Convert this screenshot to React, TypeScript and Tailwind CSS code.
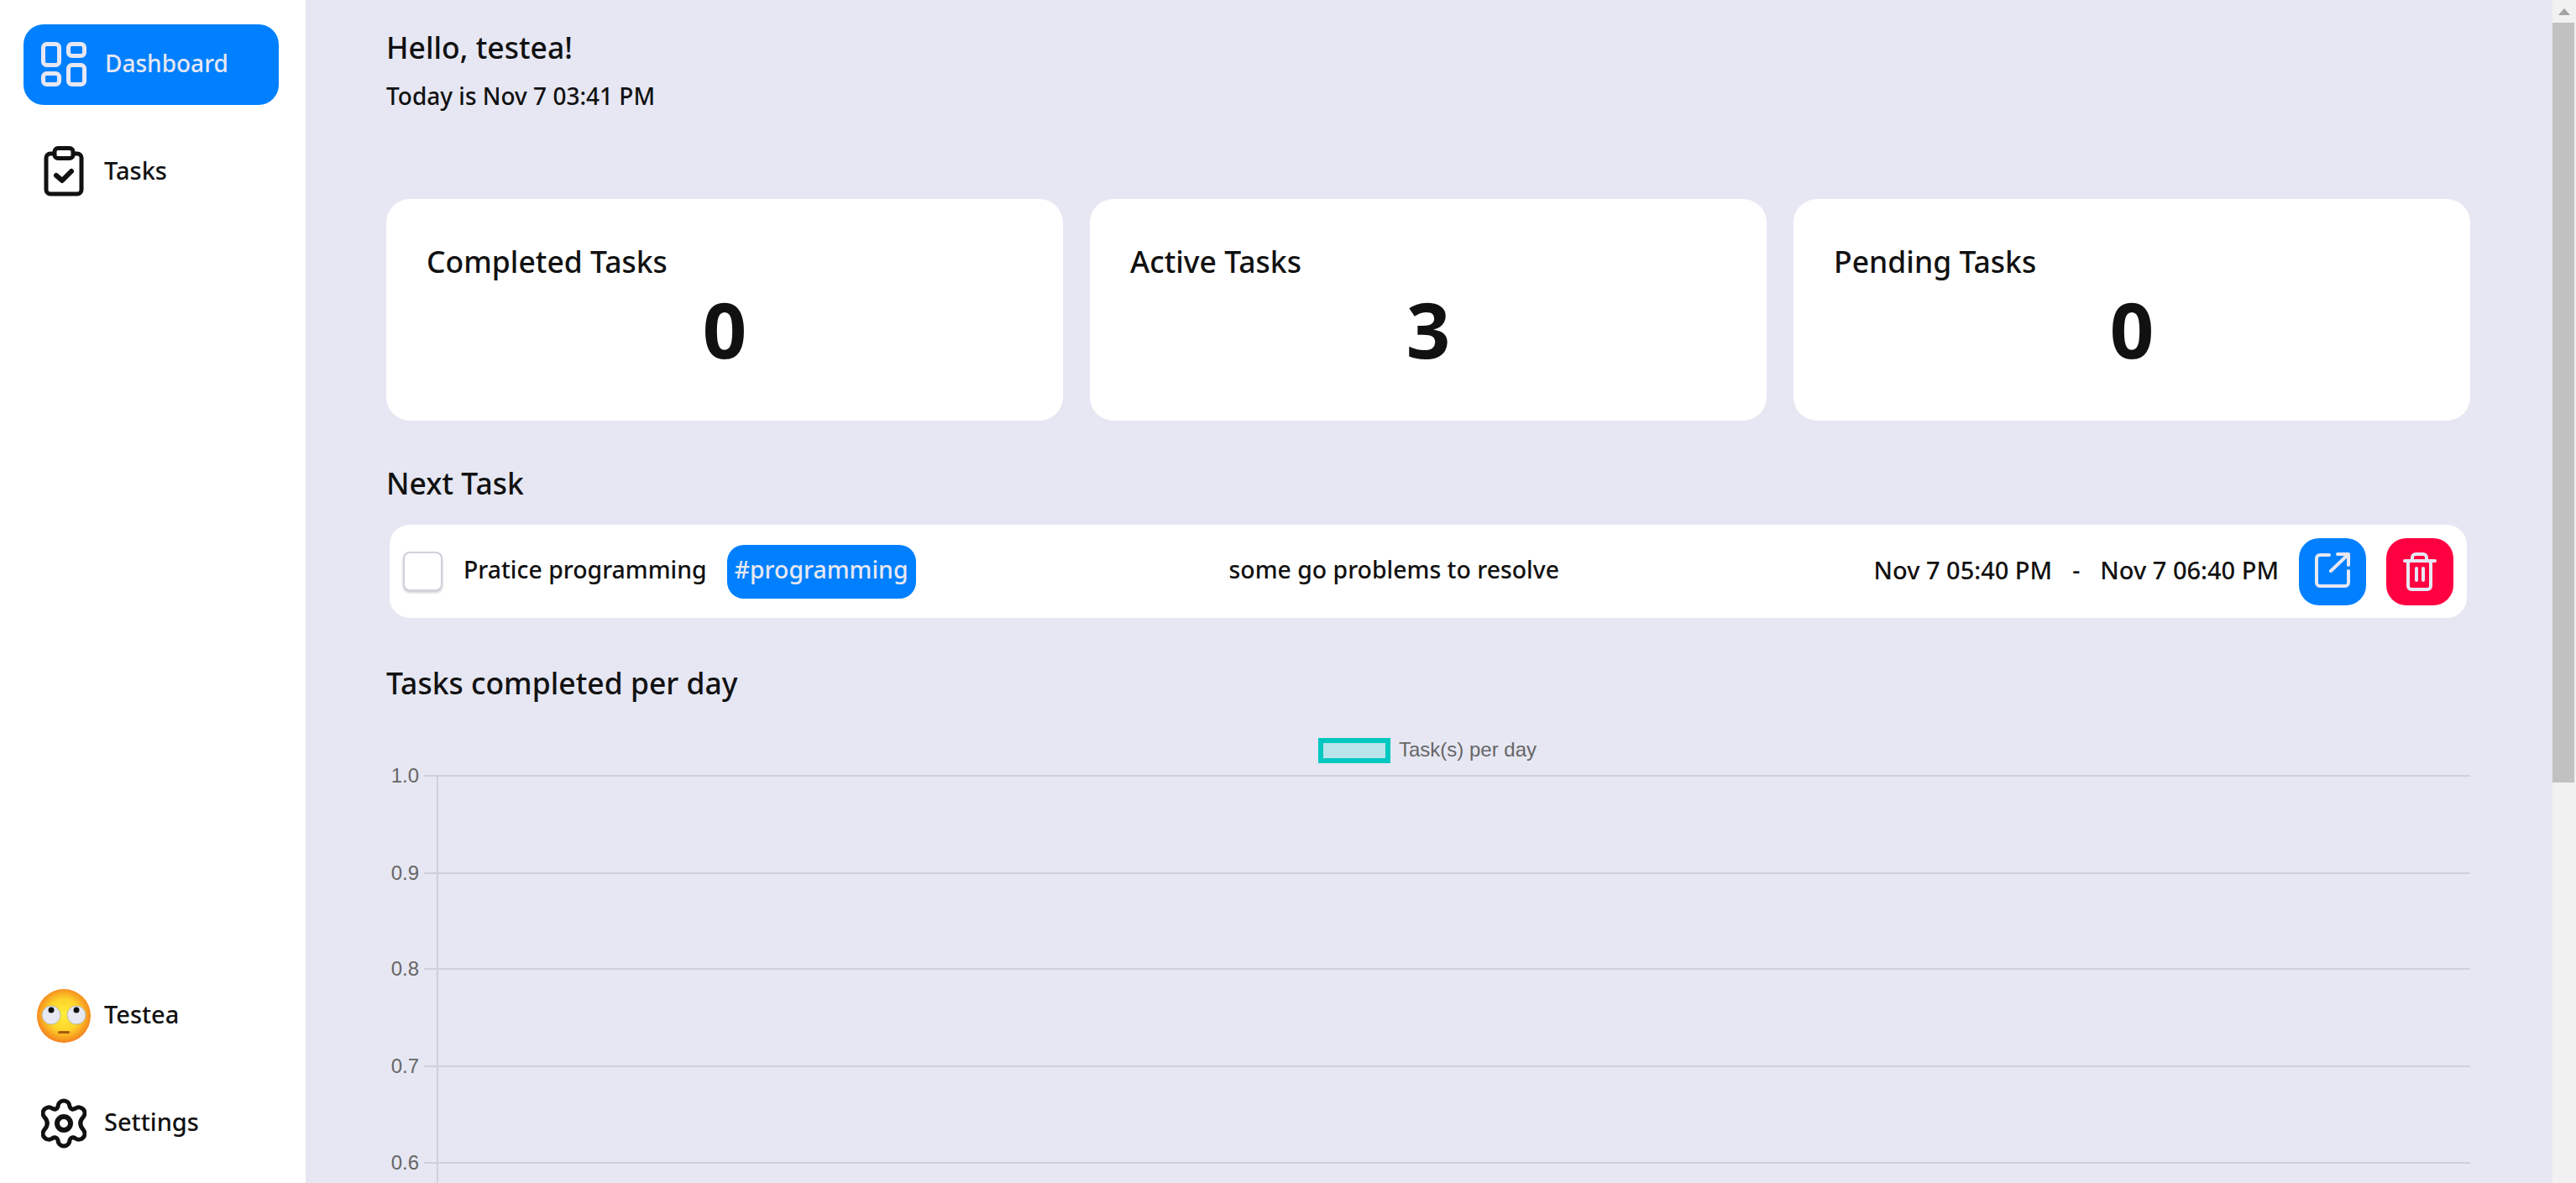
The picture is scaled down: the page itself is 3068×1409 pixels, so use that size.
import React from 'react';

const tasksCards = [
    { title: "Completed Tasks", value: 0 },
    { title: "Active Tasks", value: 3 },
    { title: "Pending Tasks", value: 0 },
];

const ticks = [
    { label: "1.0", y: 15 },
    { label: "0.9", y: 131 },
    { label: "0.8", y: 245 },
    { label: "0.7", y: 361 },
    { label: "0.6", y: 476 },
];

const DashboardIcon = () => (
    <svg width="54" height="54" viewBox="0 0 54 54" fill="none" stroke="#e6e7f3" strokeWidth="5">
        <rect x="2.5" y="2.5" width="19" height="25" rx="4" />
        <rect x="32.5" y="2.5" width="19" height="14" rx="4" />
        <rect x="2.5" y="37.5" width="19" height="13" rx="4" />
        <rect x="32.5" y="27.5" width="19" height="23" rx="4" />
    </svg>
);

const TasksIcon = () => (
    <svg width="48" height="60" viewBox="0 0 48 60" fill="none" stroke="#111" strokeWidth="5" strokeLinecap="round" strokeLinejoin="round">
        <path d="M12 9H8a5 5 0 0 0-5 5v38a5 5 0 0 0 5 5h32a5 5 0 0 0 5-5V14a5 5 0 0 0-5-5h-4" />
        <rect x="13" y="2.5" width="22" height="12" rx="4" />
        <path d="M15 35l7 6 11-11" strokeWidth="6" />
    </svg>
);

const SettingsIcon = () => (
    <svg width="54" height="60" viewBox="0 0 54 60" fill="none" stroke="#111" strokeWidth="5" strokeLinejoin="round">
        <path d="M20 10A7 7 0 0 1 34 10Q36 15 41 12A7 7 0 0 1 50.5 22Q43 30 50.5 38A7 7 0 0 1 41 48Q36 45 34 50A7 7 0 0 1 20 50Q18 45 13 48A7 7 0 0 1 3.5 38Q11 30 3.5 22A7 7 0 0 1 13 12Q18 15 20 10Z" />
        <circle cx="27" cy="30" r="8" strokeWidth="6" />
    </svg>
);

const EmojiIcon = () => (
    <svg width="64" height="64" viewBox="0 0 64 64">
        <defs>
            <radialGradient id="face" cx="50%" cy="48%" r="54%">
                <stop offset="0%" stopColor="#ffee3a" />
                <stop offset="55%" stopColor="#fdd32a" />
                <stop offset="100%" stopColor="#f47a1c" />
            </radialGradient>
        </defs>
        <circle cx="32" cy="32" r="32" fill="url(#face)" />
        <circle cx="17" cy="31" r="11" fill="#e6e9f4" stroke="#b9b9a8" />
        <circle cx="47" cy="31" r="11" fill="#e6e9f4" stroke="#b9b9a8" />
        <circle cx="17" cy="25" r="3.5" fill="#111" />
        <circle cx="47" cy="25" r="3.5" fill="#111" />
        <rect x="25" y="50" width="14" height="3" rx="1.5" fill="#a85a10" />
    </svg>
);

const App: React.FC = () => {
    return (
        <div className="flex h-[1409px] overflow-hidden bg-[#e6e7f3] font-['Noto_Sans',sans-serif] font-medium text-[#111]">
            <aside className="flex w-[364px] shrink-0 flex-col justify-between bg-white pt-[29px] pb-[41px] pl-[28px] pr-[32px]">
                <nav className="flex flex-col gap-[48px]">
                    <div className="flex h-[96px] items-center gap-[22px] rounded-[24px] bg-[#0080ff] pl-[21px] text-[28px] text-[#e6e7f3]">
                        <DashboardIcon />
                        <span className="pb-[4px]">Dashboard</span>
                    </div>
                    <div className="flex h-[62px] items-center gap-[24px] pl-[24px] text-[29px]">
                        <TasksIcon />
                        <span className="pb-[2px]">Tasks</span>
                    </div>
                </nav>
                <div className="flex flex-col gap-[66px]">
                    <div className="flex h-[64px] items-center gap-[16px] pl-[16px] text-[29px]">
                        <EmojiIcon />
                        <span className="pb-[4px]">Testea</span>
                    </div>
                    <div className="flex h-[60px] items-center gap-[21px] pl-[21px] text-[29px]">
                        <SettingsIcon />
                        <span className="pb-[4px]">Settings</span>
                    </div>
                </div>
            </aside>

            <main className="flex min-w-0 flex-1 flex-col pl-[96px] pr-[98px]">
                <h1 className="mt-[32px] text-[35.5px] leading-[48px]">Hello, testea!</h1>
                <p className="mt-[14px] text-[28px] leading-[40px]">Today is Nov 7 03:41 PM</p>

                <section className="mt-[103px] grid grid-cols-3 gap-[32px]">
                    {tasksCards.map(card => (
                        <div key={card.title} className="h-[264px] rounded-[28px] bg-white px-[48px] pt-[50px]">
                            <h2 className="text-[35.5px] leading-[48px]">{card.title}</h2>
                            <div className="mt-[7px] text-center text-[92px] font-bold leading-[100px]">{card.value}</div>
                        </div>
                    ))}
                </section>

                <h2 className="mt-[50px] text-[35.5px] leading-[48px]">Next Task</h2>

                <section className="mx-[4px] mt-[26px] flex h-[112px] items-center rounded-[24px] bg-white pl-[16px] pr-[16px] text-[28.4px]">
                    <div className="h-[47px] w-[47px] shrink-0 rounded-[8px] border-2 border-[#d0d1dc] bg-white shadow-[0_2px_3px_rgba(0,0,0,0.2)]" />
                    <span className="ml-[25px] pb-[4px]">Pratice programming</span>
                    <span className="ml-[24px] flex h-[64px] items-center rounded-[20px] bg-[#0080ff] px-[9px] pb-[4px] text-[#e6e7f3]">#programming</span>
                    <span className="ml-[373px] pb-[4px]">some go problems to resolve</span>
                    <span className="ml-auto pb-[4px] text-[29px]">Nov 7 05:40 PM</span>
                    <span className="mx-[24px] pb-[4px]">-</span>
                    <span className="pb-[4px] text-[29px]">Nov 7 06:40 PM</span>
                    <button className="ml-[24px] flex h-[80px] w-[80px] items-center justify-center rounded-[24px] bg-[#0080ff]">
                        <svg width="42" height="42" viewBox="0 0 42 42" fill="none" stroke="#e6e7f3" strokeWidth="4" strokeLinecap="round" strokeLinejoin="round" className="mb-[4px]">
                            <path d="M17 3H6a4 4 0 0 0-4 4v29a4 4 0 0 0 4 4h30a4 4 0 0 0 4-4V22" />
                            <path d="M19 22L39 3M27 2h13v13" />
                        </svg>
                    </button>
                    <button className="ml-[24px] flex h-[80px] w-[80px] items-center justify-center rounded-[24px] bg-[#ff0040]">
                        <svg width="40" height="46" viewBox="0 0 40 46" fill="none" stroke="#e6e7f3" strokeWidth="4" strokeLinecap="round" strokeLinejoin="round">
                            <path d="M2 10h36M11 9V6a4 4 0 0 1 4-4h9a4 4 0 0 1 4 4v3" />
                            <path d="M6 10v30a4 4 0 0 0 4 4h19a4 4 0 0 0 4-4V10" />
                            <path d="M16 19v14M24 19v14" />
                        </svg>
                    </button>
                </section>

                <h2 className="mt-[53px] text-[35.5px] leading-[48px]">Tasks completed per day</h2>

                <div className="relative mt-[72px] h-[500px] w-full">
                    <svg width="2482" height="500" className="block">
                        {ticks.map(tick => (
                            <g key={tick.label}>
                                <line x1="45" x2="2482" y1={tick.y} y2={tick.y} stroke="#cfd0dc" strokeWidth="2" />
                                <text x="39" y={tick.y + 8} textAnchor="end" fill="#666" fontSize="24" fontFamily="Liberation Sans" fontWeight="400">{tick.label}</text>
                            </g>
                        ))}
                        <line x1="61" x2="61" y1="15" y2="500" stroke="#cfd0dc" strokeWidth="2" />
                    </svg>
                    <div className="absolute left-[1110px] top-[-34px] flex items-center gap-[10px] font-['Liberation_Sans',sans-serif] text-[24px] font-normal text-[#666]">
                        <div className="h-[30px] w-[86px] border-[6px] border-[#00c8c0] bg-[#b8e4ea]" />
                        <span className="pb-[2px]">Task(s) per day</span>
                    </div>
                </div>
            </main>

            <div className="flex w-[28px] shrink-0 flex-col bg-[#f1f1f1]">
                <div className="flex h-[27px] items-center justify-center">
                    <div className="h-0 w-0 border-x-[7px] border-b-[8px] border-x-transparent border-b-[#a3a3a3]" />
                </div>
                <div className="h-[905px] w-[26px] bg-[#c1c1c1]" />
            </div>
        </div>
    );
};

export default App;
